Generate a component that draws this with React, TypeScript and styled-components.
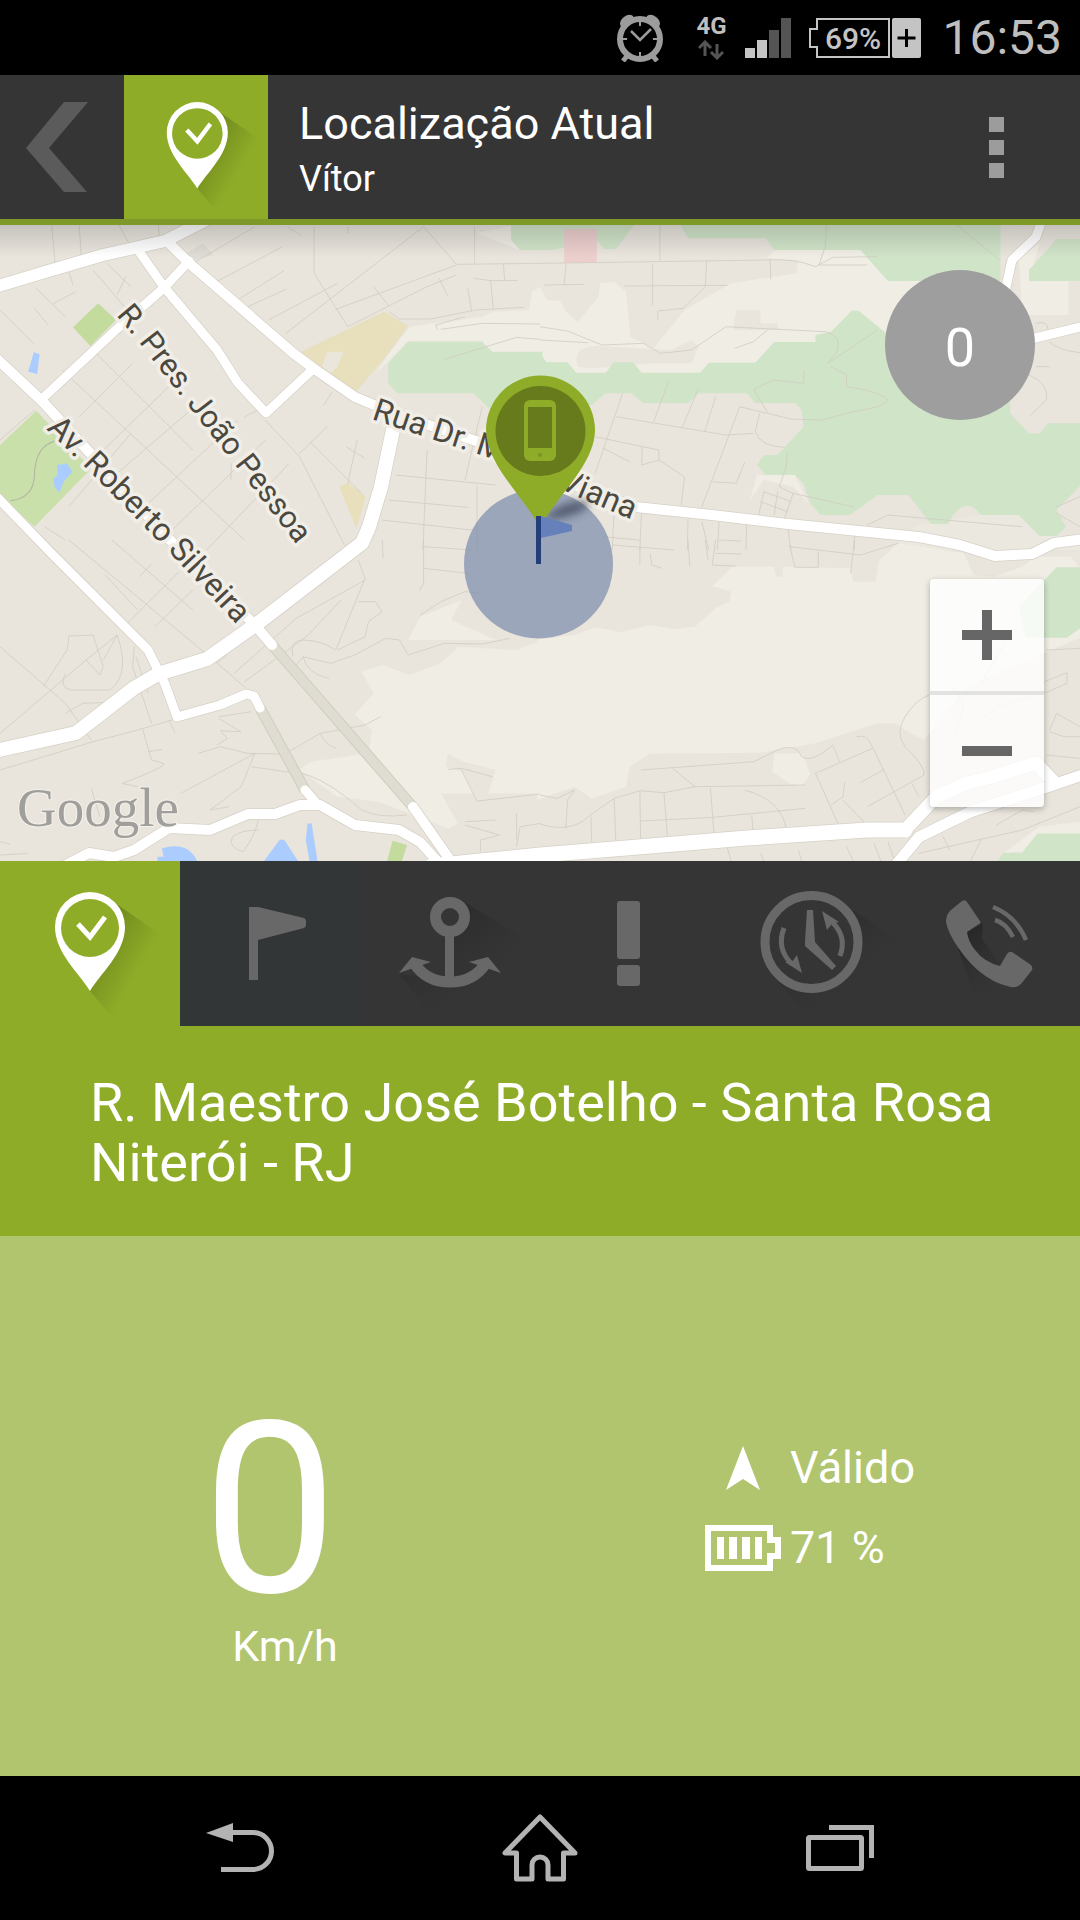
import React from "react";
import styled, { createGlobalStyle } from "styled-components";

const color = {
  bar: "#353535",
  green: "#8fac28",
  greenDark: "#7f9928",
  greenSoft: "#b1c56f",
  icon: "#686868",
  status: "#bfbfbf",
};

const GlobalStyle = createGlobalStyle`
  *, *::before, *::after { box-sizing: border-box; }
  body { margin: 0; background: #000; font-family: Roboto, "Noto Sans", sans-serif; }
  h1, p { margin: 0; font-weight: 400; }
  button { font: inherit; color: inherit; border: 0; padding: 0; background: none; cursor: pointer; }
  svg { display: block; }
`;

const Screen = styled.div`
  min-height: 100vh;
  display: flex;
  flex-direction: column;
  color: #fff;
`;

/* ---------- status bar ---------- */

const StatusBar = styled.div`
  display: flex;
  align-items: center;
  justify-content: flex-end;
  height: 75px;
  padding-right: 18px;
  background: #000;
  color: ${color.status};
`;

const Network = styled.div`
  display: flex;
  flex-direction: column;
  align-items: center;
  gap: 4px;
  width: 36px;
  margin: 0 16px 0 30px;
  font-size: 24px;
  line-height: 20px;
  font-weight: 700;
`;

const BatteryBox = styled.div`
  display: flex;
  align-items: center;
  margin: 0 21px 0 18px;
`;

const BatteryShell = styled.svg`
  width: 112px;
  height: 40px;
`;

const Clock = styled.time`
  font-size: 48px;
  line-height: 56px;
`;

/* ---------- header ---------- */

const Header = styled.header`
  display: flex;
  align-items: stretch;
  height: 150px;
  background: ${color.bar};
  border-bottom: 6px solid ${color.greenDark};
`;

const BackButton = styled.button`
  width: 124px;
  display: flex;
  align-items: center;
  padding-left: 26px;
`;

const HeaderBadge = styled.div`
  width: 144px;
  background: ${color.green};
`;

const HeaderText = styled.div`
  flex: 1;
  display: flex;
  flex-direction: column;
  justify-content: center;
  padding: 8px 0 0 31px;
`;

const Title = styled.h1`
  font-size: 45px;
  line-height: 56px;
`;

const Subtitle = styled.p`
  font-size: 36px;
  line-height: 54px;
`;

const MenuButton = styled.button`
  width: 168px;
  display: flex;
  flex-direction: column;
  align-items: center;
  justify-content: center;
  gap: 8px;
`;

const MenuDot = styled.span`
  width: 15px;
  height: 15px;
  background: #9c9c9c;
`;

/* ---------- map ---------- */

const MapArea = styled.section`
  position: relative;
  aspect-ratio: 1080 / 636;
  overflow: hidden;
  background: #e9e5dd;

  &::after {
    content: "";
    position: absolute;
    inset: 0 0 auto;
    height: 32px;
    background: linear-gradient(rgba(70, 70, 70, 0.22), rgba(70, 70, 70, 0));
    pointer-events: none;
  }
`;

const MapCanvas = styled.svg`
  width: 100%;
  height: 100%;
`;

const Counter = styled.div`
  position: absolute;
  top: 45px;
  right: 45px;
  display: flex;
  align-items: center;
  justify-content: center;
  width: 150px;
  height: 150px;
  padding-top: 4px;
  border-radius: 50%;
  background: #9e9e9e;
  font-size: 54px;
`;

const ZoomControl = styled.div`
  position: absolute;
  right: 36px;
  bottom: 54px;
  width: 114px;
  border-radius: 4px;
  background: rgba(255, 255, 255, 0.8);
  box-shadow: 0 2px 6px rgba(0, 0, 0, 0.28);
`;

const ZoomButton = styled.button`
  box-sizing: content-box;
  display: flex;
  align-items: center;
  justify-content: center;
  width: 100%;
  height: 112px;

  & + & {
    border-top: 4px solid rgba(215, 215, 215, 0.7);
  }
`;

/* ---------- tabs ---------- */

const Tabs = styled.nav`
  display: grid;
  grid-template-columns: repeat(6, 1fr);
  background: ${color.bar};
`;

const Tab = styled.button<{ $active?: boolean; $tint?: string }>`
  display: flex;
  justify-content: center;
  height: 165px;
  background: ${(p) => (p.$active ? color.green : p.$tint || color.bar)};
  color: ${(p) => (p.$active ? "#fff" : color.icon)};
`;

/* ---------- details ---------- */

const Address = styled.p`
  padding: 47px 60px 43px 90px;
  background: ${color.green};
  font-size: 54px;
  line-height: 60px;
`;

const Readings = styled.section`
  flex: 1;
  display: grid;
  grid-template-columns: 1fr 1fr;
  align-items: center;
  min-height: 460px;
  background: ${color.greenSoft};
`;

const Speed = styled.div`
  display: flex;
  flex-direction: column;
  align-items: center;
  padding-top: 60px;
`;

const SpeedValue = styled.span`
  font-size: 240px;
  line-height: 220px;
`;

const SpeedUnit = styled.span`
  padding-left: 30px;
  font-size: 43px;
  line-height: 52px;
`;

const StatusList = styled.div`
  display: grid;
  gap: 28px;
  padding: 4px 0 0 164px;
`;

const StatusRow = styled.div`
  display: flex;
  align-items: center;
  gap: 8px;
  font-size: 45px;
  line-height: 52px;
`;

const StatusIcon = styled.span`
  display: flex;
  justify-content: center;
  width: 78px;
`;

const NavBar = styled.nav`
  display: grid;
  grid-template-columns: repeat(3, 1fr);
  height: 144px;
  padding: 0 90px;
  background: #000;
`;

const NavButton = styled.button`
  display: flex;
  align-items: center;
  justify-content: center;
  color: #b3b3b3;
`;

/* ---------- drawings ---------- */

function PinDrawing({ shadowId }: { shadowId: string }) {
  return (
    <>
      <defs>
        <linearGradient id={shadowId} x1="0.15" y1="0.2" x2="0.62" y2="0.58">
          <stop offset="0" stopColor="#4f6410" stopOpacity="0.5" />
          <stop offset="1" stopColor="#4f6410" stopOpacity="0" />
        </linearGradient>
      </defs>
      <path d="M118 44 L170 80 L112 156 L90 130 Z" fill={`url(#${shadowId})`} />
      <path
        d="M90 130 C80 113 55 92 55 66 A35 35 0 0 1 125 66 C125 92 100 113 90 130 Z"
        fill="#fff"
      />
      <circle cx="90" cy="67" r="29" fill={color.green} />
      <path d="M78 63 L90 76 L105 56" fill="none" stroke="#fff" strokeWidth="5" />
    </>
  );
}

function TabShadow({ id, d }: { id: string; d: string }) {
  return (
    <>
      <defs>
        <linearGradient id={id} x1="0.1" y1="0.1" x2="0.65" y2="0.75">
          <stop offset="0" stopColor="#242424" stopOpacity="0.85" />
          <stop offset="1" stopColor="#353535" stopOpacity="0" />
        </linearGradient>
      </defs>
      <path d={d} fill={`url(#${id})`} />
    </>
  );
}

const TabSvg = ({ children }: { children: React.ReactNode }) => (
  <svg width="180" height="165" viewBox="0 0 180 165" aria-hidden="true">
    {children}
  </svg>
);

const AlarmIcon = () => (
  <svg width="46" height="48" viewBox="0 0 46 48" aria-hidden="true">
    <g fill="none" stroke="#9c9c9c">
      <circle cx="23" cy="25" r="20" strokeWidth="6" />
      <path d="M23 8v4M23 38v4M6 25h4M36 25h4" strokeWidth="2" />
      <path d="M14 17l9 9 11-11" strokeWidth="2.5" />
      <path d="M10 42l-4 5M36 42l4 5" strokeWidth="5" />
    </g>
    <path d="M3 10q0-4 4-7 5-4 9-1l1 2Q8 7 4 13zM43 10q0-4-4-7-5-4-9-1l-1 2q9 3 13 9z" fill="#9c9c9c" />
  </svg>
);

const minorNW = [
  "M150 15 160 130", "M230 15 236 110", "M345 15 385 90", "M460 15 463 60", "M200 155 212 195",
  "M0 270 100 372", "M105 205 190 290", "M100 265 140 315", "M155 250 220 215", "M270 150 370 270",
  "M310 130 380 200 M365 170 340 225", "M560 130 740 20", "M620 190 820 80", "M690 240 825 152",
  "M720 260 830 208", "M780 300 980 190", "M830 340 1230 20", "M912 20 912 160 1010 320",
  "M1230 20 1325 133 1568 130", "M975 268 1325 135", "M1010 320 1240 200 1325 165", "M1378 20 1378 130",
  "M1375 175 1425 182 1503 181 M1462 132 1465 180", "M1358 205 1370 275", "M1425 182 1432 268",
  "M1130 275 1160 297 1250 297 1380 270 1520 262", "M1270 330 1265 315 1350 290",
  "M1280 328 1400 310 1568 312", "M1290 418 1500 352 1568 358", "M1085 200 1130 260", "M1275 175 1300 228",
  "M1010 20 1012 42", "M835 20 875 48", "M180 450 710 960", "M270 390 560 690", "M200 860 380 640",
  "M230 590 385 430", "M290 700 490 500", "M340 760 565 560", "M420 860 690 600", "M500 930 770 660",
  "M600 990 840 730", "M770 600 870 710 1000 975", "M710 590 770 560 M670 780 672 730",
  "M870 700 950 620", "M900 665 1050 820", "M1005 680 1060 715", "M1037 660 1010 790",
  "M1150 765 1440 795", "M1130 840 1360 862", "M1110 900 1370 930", "M1240 690 1228 990",
  "M1385 800 1385 990", "M1400 560 1350 780", "M0 660 100 570", "M130 920 190 960", "M940 555 965 515",
];

const minorNE = [
  "M0 130 660 120 Q740 115 800 140 L850 112 980 110", "M348 15 348 125", "M832 15 828 80 810 135 950 135",
  "M12 195 128 193 M76 130 70 195", "M327 130 327 255", "M245 198 545 196", "M484 122 480 200 415 265 342 273 342 298",
  "M668 115 670 178", "M0 320 80 333 180 375 300 370 350 400 440 390 540 320 830 335",
  "M0 360 140 368", "M660 330 620 365 565 385", "M830 335 Q880 350 862 395 L835 430 980 330",
  "M845 440 890 465 890 500 Q960 510 1000 530 Q1020 545 980 560 L890 580 810 602",
  "M768 450 765 490 680 480 Q630 500 620 510 L660 575", "M220 590 540 645 620 640",
  "M240 520 160 760", "M375 480 330 605", "M460 505 412 625", "M510 530 478 635",
  "M470 860 580 560 640 575 730 597 810 600", "M638 580 625 635 Q640 680 710 682",
  "M160 650 345 690 345 720 420 770 410 855", "M185 685 260 725", "M297 680 295 735 345 720",
  "M595 725 570 790 500 785", "M718 700 715 740 695 800 735 820 910 860", "M650 815 635 885",
  "M650 815 730 845 M640 845 720 875 M735 820 710 895 M690 815 680 885", "M950 915 1010 885 1400 920",
  "M470 905 490 990 M520 905 515 990 M430 890 428 990 M600 905 598 990 M295 870 290 990",
  "M720 925 728 990 M913 945 913 990", "M215 870 210 990 M180 950 290 960", "M520 960 585 963",
  "M1420 465 Q1480 490 1470 540 L1420 590", "M1480 365 Q1500 390 1568 398", "M1440 310 Q1475 300 1475 330 M1440 440 1480 440",
  "M1210 15 1335 120", "M1568 830 1500 860", "M1500 880 1568 920",
];

const minorSW = [
  "M0 320 190 490 265 600", "M0 580 250 360", "M305 105 400 210", "M405 110 440 72", "M200 0 620 360 715 445",
  "M325 0 560 210", "M360 260 520 95", "M450 260 560 150", "M680 400 860 235 1060 120",
  "M710 425 895 285 990 180", "M250 360 340 285 300 360", "M125 440 195 330 200 288 270 285 300 380 290 405 250 360",
  "M190 400 Q170 440 205 450 L320 450 Q380 400 340 285", "M390 320 385 380 440 550", "M0 690 270 605 400 570 500 540 M490 540 508 578",
  "M190 520 240 490 370 485", "M415 570 440 660 475 670 Q485 680 355 730 L400 740", "M430 635 470 628 M430 460 395 350",
  "M575 640 640 620 720 640 830 642", "M635 535 700 575 640 572 660 595 630 615", "M730 515 635 530", "M740 640 700 740 610 810 665 800",
  "M740 640 525 760", "M730 680 830 695 Q920 690 1050 810 Q1100 835 1180 825", "M830 640 930 580 1060 555 1105 530",
  "M930 580 Q940 610 975 625", "M860 375 880 350 960 370 1030 345 1120 295 1160 300 1185 345 1290 310 1400 312 1480 295",
  "M850 350 Q840 300 880 300 Q930 300 975 330 L1060 115 1040 60", "M880 350 Q890 400 955 415", "M1040 185 1090 185 1110 215 1070 245 1060 290 980 330",
  "M1220 225 1280 185 1350 155 1400 160", "M1230 0 1230 130 1218 152", "M1230 20 1370 30 M1230 85 1360 100 M1110 0 1112 55",
  "M1300 688 1340 685 1430 710 M1340 690 1385 783 1568 762", "M1568 850 1510 860 1500 920 M1500 820 1500 900",
  "M1350 845 1440 840 M1350 855 1450 885 1395 900 1395 935", "M750 840 Q740 890 705 935 Q660 920 675 890 Q700 870 750 870", "M265 745 290 830 M0 905 30 912 M0 945 80 940 M630 370 760 245",
];

const minorSE = [
  "M210 15 390 30 M290 20 290 75 M320 40 325 75 355 85 M430 0 435 80 M480 0 488 60", "M510 0 500 75 570 78 M510 40 585 42",
  "M725 15 740 82 808 82 808 35 M725 20 930 45 1040 10 M913 0 902 100", "M293 690 620 665 670 640 Q740 600 760 650 Q790 670 850 615 L870 665",
  "M385 685 450 740 770 735", "M215 775 290 752 360 758 450 740", "M0 765 50 775 100 750 80 780 75 865",
  "M0 852 Q90 880 140 830 L215 775", "M148 830 150 905 M215 775 220 900 M290 752 292 895 M360 758 370 890",
  "M495 745 505 880 M290 843 500 832 770 805 M615 825 618 870", "M595 750 Q700 780 715 865", "M800 700 965 625 M800 700 865 850",
  "M920 590 Q950 580 965 620 L1060 825", "M930 728 1000 688 M950 800 1115 705 Q1120 680 1060 620 Q1030 580 1060 530 T1130 465",
  "M845 795 880 770 885 725 M880 780 940 845", "M1080 730 1100 770 M540 910 555 963 M640 940 650 963 M750 930 760 963 M890 920 910 963",
  "M970 910 990 963 M1010 905 1030 963 M1170 890 1190 930 M1100 940 1270 900 1400 870 1568 800", "M1280 900 1250 963",
  "M1465 425 1530 398 1530 430 1465 460 M1480 570 1500 520 1568 560 M1480 575 1520 590 1568 590", "M1470 330 1568 325 M1470 645 1568 655",
  "M1325 855 1400 810 1435 815", "M1200 600 1230 500 1200 440 M1280 430 1350 310 M1250 560 1330 500 1420 470",
];

type Quadrant = { x: number; y: number; lines: string[] };
const quadrants: Quadrant[] = [
  { x: 0, y: 220, lines: minorNW },
  { x: 540, y: 220, lines: minorNE },
  { x: 0, y: 540, lines: minorSW },
  { x: 540, y: 540, lines: minorSE },
];

const quad = (x: number, y: number) => `translate(${x} ${y}) scale(0.3444 0.3334)`;

const roads = [
  { w: 12, d: "M-5 287 45 272 103 255 165 241 212 217" },
  { w: 10, d: "M169 243 189 263 293 353 313 368 355 397 393 413 482 443 560 480 636 507 712 515 788 524 919 537 960 545 995 556 1032 554 1054 543 1085 539" },
  { w: 9, d: "M138 250 164 287 217 350 238 383 266 413 312 370" },
  { w: 9, d: "M189 261 165 287 119 327 43 398" },
  { w: 10, d: "M-5 357 43 402 90 453 170 540 255 625 272 645" },
  { w: 9, d: "M-5 495 50 552 148 650 158 670 165 684 177 717 220 705 246 694 254 696 260 708" },
  { w: 14, d: "M-5 751 76 733 134 688 158 674 207 659 258 623 362 543 369 527 381 487 394 425" },
  { w: 10, d: "M60 868 89 853 114 857 134 850 169 828 210 830 248 814 275 814 300 805 320 805 355 825 399 830 420 842 440 864" },
  { w: 9, d: "M305 790 318 805" },
  { w: 10, d: "M413 807 448 857" },
  { w: 15, d: "M432 866 480 861 540 855 626 848 747 838 867 830 905 830" },
  { w: 13, d: "M905 830 936 797 967 783 988 778 1036 763 1053 781" },
  { w: 11, d: "M895 866 919 837 970 812 1050 786 1085 774" },
  { w: 9, d: "M1043 217 1036 237 1012 260 1006 287 1000 350 1035 338 1085 326" },
];

const labels = [
  { id: "label-pessoa", size: 31, text: "R. Pres. João Pessoa", d: "M116 315 L141 345 L190 408 L238 469 L318 572" },
  { id: "label-silveira", size: 32, text: "Av. Roberto Silveira", d: "M46 429 L86 468 L170 553 L270 660" },
  { id: "label-viana", size: 32, text: "Rua Dr. Mário Viana", d: "M371 419 L434 440 L500 461 L578 497 L680 540" },
];

function MapDrawing() {
  return (
    <MapCanvas viewBox="0 225 1080 636" preserveAspectRatio="xMidYMid slice" role="img" aria-label="Mapa">
      <rect x="0" y="225" width="1080" height="636" fill="#e9e5dd" />

      <g fill="#f0ede5">
        <g transform={quad(0, 220)}>
          <path d="M1385 40 1490 15 1510 90Z" />
          <path d="M1190 320 1400 290 1430 275 1535 270 1545 215 1568 200V410L1425 395 1400 362 1185 362 1127 425 1090 460 1130 400Z" />
        </g>
        <g transform={quad(540, 220)}>
          <path d="M680 90 930 88 1010 180H1340V350H1000L915 270 845 335 800 367 680 367 625 429 465 460H295L270 429H215L190 460H105L80 429H0V200L20 240 60 242 75 275 110 305 170 230 175 190 215 185 250 215 262 350 330 385 420 270 555 190 745 160 750 120 660 115Z" />
          <path d="M1390 110 1450 70 1420 183H1535V285H1400ZM630 765H740L780 850 735 800 650 780 610 840Z" />
          <path d="M1090 915 1280 885 1390 885 1450 948 1568 948V990H1020Z" opacity="0.35" />
        </g>
        <g transform={quad(0, 540)}>
          <path d="M1575 300 1500 330 1330 320 1280 370 1190 405 1110 375 1050 395 1085 460 1030 525 1080 570 1070 640 900 665 870 690 980 770 1100 785 1300 865 1330 850 1280 760H1575ZM1220 230 1340 180 1310 240 1440 300 1185 300Z" />
        </g>
        <g transform={quad(540, 540)}>
          <path d="M-8 298 100 285 160 262 235 277 320 255 390 268 450 260 510 205 550 185 555 155 500 138 560 80 680 80 685 110 705 110 705 80 900 85 910 125H975L985 60 1040 10 1230 40 1260 105 1320 110 1400 80 1440 50H1540L1575 90V290L1240 440 1115 600 1060 570 1030 550H980L800 610 640 638 320 640 260 680 250 740 150 775 100 740 -8 780Z" />
          <path d="M680 640 760 640 785 700 760 740 725 730 675 695ZM1345 940 1450 860 1568 845V880H1445L1400 935Z" />
        </g>
      </g>

      <g fill="#e9e5dd">
        <g transform={quad(540, 220)}>
          <path d="M110 440Q90 385 160 378L380 390 440 360 460 380 440 430 320 430 150 445ZM570 270H640V310H690V330H560Z" />
        </g>
        <g transform={quad(0, 540)}>
          <path d="M1300 640 1345 665 1440 690 1410 780H1385L1345 695 1295 680Z" />
        </g>
      </g>

      <g fill="#d0e4c8">
        <g transform={quad(0, 220)}>
          <path d="M1484 0V60L1510 90H1575V0ZM1185 365H1400L1430 395H1575V610H1440L1420 565 1375 520H1155L1127 490V430Z" />
        </g>
        <g transform={quad(540, 220)}>
          <path d="M-5 0H285L220 87H185L165 60 40 90H-5ZM405 10 430 55H655L680 90H930L1010 183H1337V10ZM1420 183V150L1500 57H1575V183Z" />
          <path d="M-5 395 20 427H80L105 458H190L215 427H270L295 458H465L490 428H625L680 366H800V345L845 335 905 272H925L1000 335 1365 480V580L1420 640H1450L1475 610H1575V790L1500 870 1527 920 1500 948H1450L1390 885H1280Q1240 830 1200 885L1185 912H1135L1070 825H980L900 885H815L785 850 765 790 740 765H655L630 735 650 705H690L765 620 760 570 740 549H625L600 520H460L430 549H300L265 520H190L150 555H-5Z" />
        </g>
        <g transform={quad(540, 540)}>
          <path d="M1390 200 1500 82H1575V260L1530 293H1410ZM1325 970 1345 938H1400L1445 880H1575V970Z" />
        </g>
      </g>

      <g transform={quad(0, 220)}>
        <path d="M865 400 1115 275 1185 318 1120 410 1030 520 920 450Z" fill="#e8dfbd" />
        <path d="M935 440 950 395 998 395 980 440 960 460Z" fill="#eae6dc" />
        <path d="M985 800 1010 788 1062 830 1035 925Z" fill="#e8dfbd" />
        <path d="M285 250 337 300 262 378 212 322Z" fill="#c3dc9e" />
        <path d="M0 675 105 572 265 745 100 920 0 825Z" fill="#cae0aa" />
        <path d="M98 397 115 403 108 462 82 455Z" fill="#aaccff" />
        <path d="M165 735 195 730 210 755 185 785 172 818 158 800 155 775 168 765Z" fill="#aaccff" />
        <path d="M30 842 Q95 835 100 770 Q100 680 160 663" fill="none" stroke="#b3b3a0" strokeWidth="3" />
        <path d="M540 100 590 70 620 105 560 120Z" fill="#dfdbd5" />
      </g>
      <g transform={quad(540, 220)}>
        <path d="M70 27H165V128H70Z" fill="#eccfcd" />
      </g>
      <g transform={quad(0, 540)}>
        <path d="M470 925Q550 900 575 970H455L458 950 475 950ZM765 965 810 902Q825 890 835 915L870 970ZM893 850H905L923 970H900L888 900Z" fill="#aaccff" />
        <path d="M1140 902 1182 915 1165 970H1122Z" fill="#c3dc9e" />
      </g>

      {quadrants.map((q) => (
        <g key={`${q.x}-${q.y}`} transform={quad(q.x, q.y)} fill="none" stroke="#d0ccc1" strokeWidth="2.4">
          {q.lines.map((d) => (
            <path key={d} d={d} />
          ))}
        </g>
      ))}

      <g fill="none">
        <path d="M272 645 413 807M260 708 305 790" stroke="#cfcdbf" strokeWidth="11" />
        <path d="M272 645 413 807M260 708 305 790" stroke="#dfddd1" strokeWidth="9" />
        {roads.map((r) => (
          <path key={r.d} d={r.d} stroke="#d6d1c6" strokeWidth={r.w + 1.5} strokeLinejoin="round" />
        ))}
        {roads.map((r) => (
          <path key={r.d} d={r.d} stroke="#fff" strokeWidth={r.w} strokeLinejoin="round" strokeLinecap="round" />
        ))}
      </g>

      <g
        fill="#4b483f"
        stroke="#f1eee7"
        strokeWidth="7"
        strokeLinejoin="round"
        paintOrder="stroke"
        fontFamily="Roboto, sans-serif"
      >
        {labels.map((l) => (
          <React.Fragment key={l.id}>
            <path id={l.id} d={l.d} fill="none" stroke="none" />
            <text fontSize={l.size}>
              <textPath href={`#${l.id}`}>{l.text}</textPath>
            </text>
          </React.Fragment>
        ))}
      </g>

      <text
        x="17"
        y="826"
        fontFamily="'Liberation Serif', serif"
        fontSize="55"
        fill="#a19f9b"
        stroke="#f3f1ec"
        strokeWidth="2"
        paintOrder="stroke"
      >
        Google
      </text>

      <defs>
        <filter id="pin-blur" x="-50%" y="-50%" width="200%" height="200%">
          <feGaussianBlur stdDeviation="5" />
        </filter>
      </defs>
      <circle cx="538.5" cy="564" r="74.5" fill="#8290ae" fillOpacity="0.75" />
      <path d="M541 521 Q560 500 590 501 Q588 515 541 521Z" fill="#333a50" opacity="0.75" filter="url(#pin-blur)" />
      <path d="M540 528 C526 499 486 465 486 430 A54.500 54.500 0 0 1 595 430 C595 465 554 499 540 528Z" fill={color.green} />
      <circle cx="540.5" cy="431" r="45" fill="#677a1c" />
      <rect x="524" y="400" width="32" height="61" rx="6" fill={color.green} />
      <rect x="528" y="407" width="24" height="41" fill="#677a1c" />
      <circle cx="540" cy="455" r="2" fill="#7b9620" />
      <path d="M541 516 572 525V531L541 538Z" fill="#6580bb" />
      <rect x="536" y="516" width="5" height="48" fill="#243f78" />
    </MapCanvas>
  );
}

export default function App() {
  return (
    <Screen>
      <GlobalStyle />
      <StatusBar>
        <AlarmIcon />
        <Network>
          4G
          <svg width="26" height="20" viewBox="0 0 26 20" fill="none" stroke="#555" strokeWidth="3" aria-hidden="true">
            <path d="M7 16V2M1 8l6-6 6 6M19 4v14M13 12l6 6 6-6" />
          </svg>
        </Network>
        <svg width="46" height="40" viewBox="0 0 46 40" aria-hidden="true">
          <path d="M0 30h10v10H0zM12 22h10v18H12z" fill="#c4c4c4" />
          <path d="M24 12h10v28H24zM36 0h10v40H36z" fill="#545454" />
        </svg>
        <BatteryBox>
          <BatteryShell viewBox="0 0 112 40" aria-label="Bateria 69%">
            <path d="M8 1h72v38H8V29H1V11h7z" fill="none" stroke="#c4c4c4" strokeWidth="2" />
            <rect x="83" width="29" height="40" rx="2" fill="#c4c4c4" />
            <path d="M97.500 11v18M88.500 20h18" stroke="#000" strokeWidth="3" />
            <text x="44" y="31" textAnchor="middle" fontSize="30" fontWeight="500" fontFamily="Roboto, sans-serif" fill="#c4c4c4">
              69%
            </text>
          </BatteryShell>
        </BatteryBox>
        <Clock>16:53</Clock>
      </StatusBar>

      <Header>
        <BackButton aria-label="Voltar">
          <svg width="62" height="90" viewBox="0 0 62 90" aria-hidden="true">
            <path d="M38 0H62L23 46 61 90H38L0 46Z" fill="#5b5b5b" />
          </svg>
        </BackButton>
        <HeaderBadge>
          <svg width="144" height="144" viewBox="6 0 165 165" aria-hidden="true">
            <PinDrawing shadowId="badge-shadow" />
          </svg>
        </HeaderBadge>
        <HeaderText>
          <Title>Localização Atual</Title>
          <Subtitle>Vítor</Subtitle>
        </HeaderText>
        <MenuButton aria-label="Menu">
          <MenuDot />
          <MenuDot />
          <MenuDot />
        </MenuButton>
      </Header>

      <MapArea>
        <MapDrawing />
        <Counter>0</Counter>
        <ZoomControl>
          <ZoomButton aria-label="Aumentar zoom">
            <svg width="50" height="50" viewBox="0 0 50 50" aria-hidden="true">
              <path d="M20 0h10v20h20v10H30v20H20V30H0V20h20z" fill="#666" />
            </svg>
          </ZoomButton>
          <ZoomButton aria-label="Diminuir zoom">
            <svg width="50" height="10" viewBox="0 0 50 10" aria-hidden="true">
              <path d="M0 0h50v10H0z" fill="#666" />
            </svg>
          </ZoomButton>
        </ZoomControl>
      </MapArea>

      <Tabs aria-label="Seções">
        <Tab $active aria-label="Localização">
          <TabSvg>
            <PinDrawing shadowId="tab-shadow" />
          </TabSvg>
        </Tab>
        <Tab $tint="#333637" aria-label="Bandeira">
          <TabSvg>
            <path d="M69 46H78L124 57Q126 58 126 60V64Q126 66 124 67L78 79V119H69Z" fill="currentColor" />
          </TabSvg>
        </Tab>
        <Tab aria-label="Âncora">
          <TabSvg>
            <TabShadow id="anchor-shadow" d="M106 42 L180 86 V165 H80 L39 113 L90 120 L92 76 Z" />
            <circle cx="90" cy="56" r="14.500" fill="none" stroke="currentColor" strokeWidth="11" />
            <path d="M85 74H94V118H85Z" fill="currentColor" />
            <path d="M54 102Q66 121 90 121T126 102" fill="none" stroke="currentColor" strokeWidth="11" />
            <path d="M52 96 71 101 39 112ZM128 96 109 101 141 112Z" fill="currentColor" />
          </TabSvg>
        </Tab>
        <Tab aria-label="Alertas">
          <TabSvg>
            <rect x="77" y="40" width="23" height="58" rx="3" fill="currentColor" />
            <rect x="77" y="104" width="23" height="21" rx="3" fill="currentColor" />
          </TabSvg>
        </Tab>
        <Tab aria-label="Histórico">
          <TabSvg>
            <TabShadow id="clock-shadow" d="M134 50 L180 80 V165 H95 L58 120 Z" />
            <circle cx="91.500" cy="81" r="46.500" fill={color.bar} stroke="currentColor" strokeWidth="9" />
            <path d="M87 49H93L95 81 116 105 112 109 85 85V80Z" fill="currentColor" />
            <path d="M64 67Q56 88 72 103M120 95Q127 76 113 62" fill="none" stroke="currentColor" strokeWidth="5" />
            <path d="M82 112 65 101 72 101 77 94ZM102 50 119 61 112 63 107 69Z" fill="currentColor" />
          </TabSvg>
        </Tab>
        <Tab aria-label="Telefone">
          <TabSvg>
            <TabShadow id="phone-shadow" d="M67 71 L83 62 L82 78 L102 105 L132 106 L140 150 H80 L58 88 Z" />
            <path
              d="M62 40Q65 38 67 41L80 60Q81 62 79 63L67 71Q68 80 75 89Q84 101 100 105L107 93Q109 90 112 91L131 104Q133 106 132 109L121 123Q117 127 111 126Q86 121 66 97Q49 76 46 61Q46 53 51 49Z"
              fill="currentColor"
            />
            <path d="M93 46Q116 55 126 79M95 59Q106 62 113 76" fill="none" stroke="currentColor" strokeWidth="4.500" />
          </TabSvg>
        </Tab>
      </Tabs>

      <Address>R. Maestro José Botelho - Santa Rosa Niterói - RJ</Address>

      <Readings>
        <Speed>
          <SpeedValue>0</SpeedValue>
          <SpeedUnit>Km/h</SpeedUnit>
        </Speed>
        <StatusList>
          <StatusRow>
            <StatusIcon>
              <svg width="34" height="44" viewBox="0 0 34 44" aria-hidden="true">
                <path d="M17 0 34 44 17 33 0 44Z" fill="#fff" />
              </svg>
            </StatusIcon>
            Válido
          </StatusRow>
          <StatusRow>
            <StatusIcon>
              <svg width="76" height="46" viewBox="0 0 76 46" aria-hidden="true">
                <path d="M3 3h62v12h8v16h-8v12H3z" fill="none" stroke="#fff" strokeWidth="6" />
                <path d="M12 12h7v22h-7zM24 12h8v22h-8zM37 12h8v22h-8zM50 12h7v22h-7z" fill="#fff" />
              </svg>
            </StatusIcon>
            71 %
          </StatusRow>
        </StatusList>
      </Readings>

      <NavBar aria-label="Sistema">
        <NavButton aria-label="Voltar">
          <svg width="68" height="50" viewBox="0 0 68 50" aria-hidden="true">
            <path d="M27 0V19L0 10Z" fill="currentColor" />
            <path d="M26 9.500H47A18 18 0 0 1 47 46.500H15" fill="none" stroke="currentColor" strokeWidth="5" />
          </svg>
        </NavButton>
        <NavButton aria-label="Início">
          <svg width="78" height="70" viewBox="0 0 78 70" fill="none" stroke="currentColor" strokeWidth="5" aria-hidden="true">
            <path d="M39 4 4 40H15.500V66H31V52a8 8 0 0 1 16 0V66H62.500V40H74Z" strokeLinejoin="round" />
          </svg>
        </NavButton>
        <NavButton aria-label="Aplicativos recentes">
          <svg width="68" height="46" viewBox="0 0 68 46" fill="none" stroke="currentColor" strokeWidth="5" aria-hidden="true">
            <rect x="2.500" y="12.500" width="53" height="31" rx="1" />
            <path d="M23 2.500H65.500V33" />
          </svg>
        </NavButton>
      </NavBar>
    </Screen>
  );
}
